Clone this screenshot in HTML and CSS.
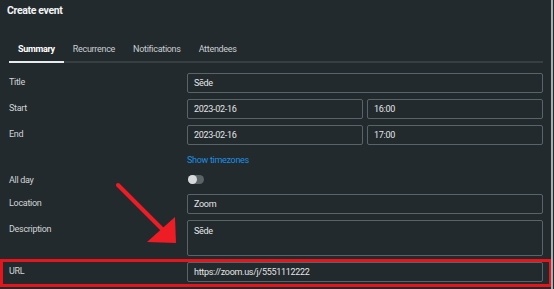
FILE: index.html
```html
<!DOCTYPE html>
<html lang="en">
<head>
    <meta charset="UTF-8">
    <title>Create event</title>
    <link rel="stylesheet" href="styles.css">
</head>
<body>
    <div class="dialog">
        <div class="dialog-title">Create event</div>

        <div class="tabs">
            <div class="tab active">Summary</div>
            <div class="tab">Recurrence</div>
            <div class="tab">Notifications</div>
            <div class="tab">Attendees</div>
        </div>

        <div class="form">
            <div class="label">Title</div>
            <div class="field">Sēde</div>

            <div class="label">Start</div>
            <div class="pair">
                <div class="field">2023-02-16</div>
                <div class="field">16:00</div>
            </div>

            <div class="label">End</div>
            <div class="pair">
                <div class="field">2023-02-16</div>
                <div class="field">17:00</div>
            </div>

            <div></div>
            <div class="link">Show timezones</div>

            <div class="label label-tight">All day</div>
            <div class="toggle-cell"><span class="toggle"><span class="knob"></span></span></div>

            <div class="label">Location</div>
            <div class="field">Zoom</div>

            <div class="label">Description</div>
            <div class="field textarea">Sēde</div>

            <div class="label">URL</div>
            <div class="field">https://zoom.us/j/5551112222</div>
        </div>

        <!-- annotation -->
        <div class="highlight"></div>
        <svg class="arrow" width="72" height="70" viewBox="110 178 72 70">
            <line x1="118" y1="185" x2="164" y2="231" stroke="#ee1c25" stroke-width="4" stroke-linecap="round"/>
            <polygon points="175,217 147,242 176,243" fill="#ee1c25"/>
        </svg>
    </div>
</body>
</html>
```

FILE: styles.css
```css
* {
    margin: 0;
    padding: 0;
    box-sizing: border-box;
}

body {
    background-color: #222a2d;
    font-family: 'Roboto', 'Liberation Sans', sans-serif;
    font-size: 9px;
    letter-spacing: -0.3px;
    color: #d3d7d9;
}

.dialog {
    position: relative;
    width: 553px;
    height: 289px;
    padding: 0 8px 0 9px;
    border-right: 2px solid #a7adb0;
    overflow: hidden;
}

.dialog-title {
    margin-left: -2px;
    padding: 4px 0 12px;
    font-size: 10.5px;
    line-height: 14px;
    font-weight: bold;
    letter-spacing: -0.35px;
    color: #f1f3f4;
}

/* Tabs */
.tabs {
    display: flex;
    border-bottom: 2px solid #373f42;
}

.tab {
    padding: 13px 9px 6px;
    line-height: 12px;
    color: #c9ced1;
    border-bottom: 2px solid transparent;
    margin-bottom: -2px;
}

.tab.active {
    color: #ffffff;
    font-weight: bold;
    border-bottom-color: #e8ebed;
}

/* Form */
.form {
    display: grid;
    grid-template-columns: 178px 1fr;
    row-gap: 6px;
    padding-top: 10px;
}

.label {
    padding-top: 3px;
    line-height: 12px;
    color: #d0d5d7;
}

.label-tight {
    padding-top: 1px;
}

.field {
    height: 20px;
    padding: 0 6px;
    line-height: 18px;
    border: 1px solid #59646a;
    border-radius: 2px;
    color: #e2e5e7;
    white-space: nowrap;
}

.field.textarea {
    height: 36px;
    padding-top: 1px;
}

.pair {
    display: flex;
    gap: 4px;
}

.pair .field {
    flex: 1;
}

.link {
    height: 16px;
    padding-top: 2px;
    line-height: 14px;
    color: #1d8fe1;
}

.toggle-cell {
    height: 15px;
    padding-top: 2px;
}

.toggle {
    display: block;
    width: 16px;
    height: 9px;
    margin-left: 1px;
    border-radius: 5px;
    background-color: #5c6367;
    position: relative;
}

.knob {
    position: absolute;
    left: 0;
    top: 0;
    width: 9px;
    height: 9px;
    border-radius: 50%;
    background-color: #d6dadc;
}

/* Annotation overlay */
.highlight {
    position: absolute;
    left: 0;
    top: 259px;
    width: 552px;
    height: 28px;
    border: 3px solid #e8141c;
}

.arrow {
    position: absolute;
    left: 110px;
    top: 178px;
}
```
